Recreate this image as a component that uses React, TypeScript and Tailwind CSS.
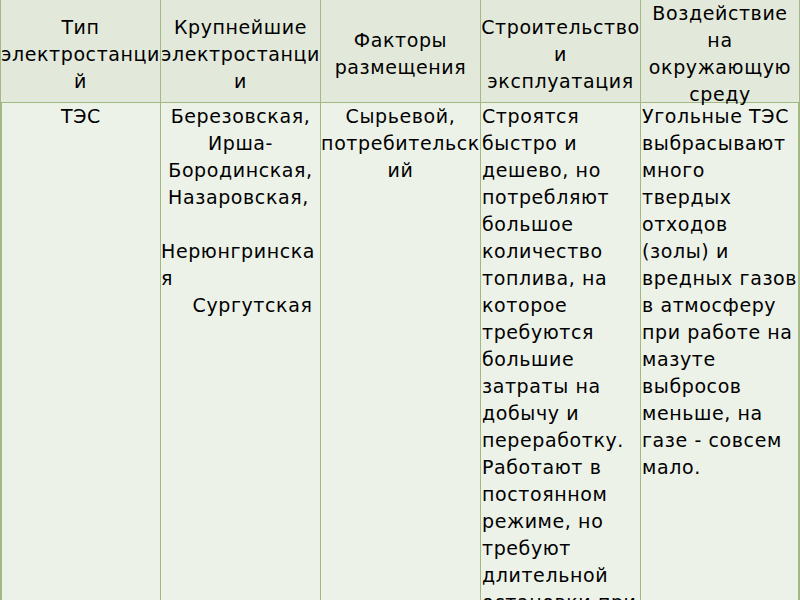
const HEAD: { lines: string[] }[] = [
  { lines: ['Тип', 'электростанци', 'й'] },
  { lines: ['Крупнейшие', 'электростанци', 'и'] },
  { lines: ['Факторы', 'размещения'] },
  { lines: ['Строительство', 'и', 'эксплуатация'] },
  { lines: ['Воздействие', 'на', 'окружающую', 'среду'] },
];

const BUILD = [
  'Строятся',
  'быстро и',
  'дешево, но',
  'потребляют',
  'большое',
  'количество',
  'топлива, на',
  'которое',
  'требуются',
  'большие',
  'затраты на',
  'добычу и',
  'переработку.',
  'Работают в',
  'постоянном',
  'режиме, но',
  'требуют',
  'длительной',
  'остановки при',
];

const IMPACT = [
  'Угольные ТЭС',
  'выбрасывают',
  'много',
  'твердых',
  'отходов',
  '(золы) и',
  'вредных газов',
  'в атмосферу',
  'при работе на',
  'мазуте',
  'выбросов',
  'меньше, на',
  'газе - совсем',
  'мало.',
];

const Line = ({ children, className = '' }: { children: React.ReactNode; className?: string }) => (
  <div className={`whitespace-nowrap h-[27px] ${className}`}>{children}</div>
);

export default function App() {
  return (
    <div
      className="w-[800px] h-[600px] overflow-hidden bg-[#edf2e9] text-black text-[19px] leading-[27px] tracking-[0.6px] flex flex-col"
      style={{ fontFamily: '"DejaVu Sans", Verdana, sans-serif' }}
    >
      {/* header row */}
      <div className="grid grid-cols-5 h-[103px] shrink-0 bg-[#e3e9da] border-b border-[#a3b883]">
        {HEAD.map((h, i) => (
          <div
            key={i}
            className={`border-l border-[#a3b883] flex flex-col items-center justify-center text-center ${i === 4 ? 'border-r' : ''}`}
          >
            {h.lines.map((l, j) => (
              <Line key={j}>{l}</Line>
            ))}
          </div>
        ))}
      </div>

      {/* body row */}
      <div className="grid grid-cols-5 flex-1 min-h-0">
        <div className="border-l-2 border-[#a3b883] text-center">
          <Line>ТЭС</Line>
        </div>
        <div className="border-l border-[#a3b883] text-center">
          <Line>Березовская,</Line>
          <Line>Ирша-</Line>
          <Line>Бородинская,</Line>
          <Line className="pr-1">Назаровская,</Line>
          <Line>{' '}</Line>
          <Line className="text-left">Нерюнгринска</Line>
          <Line className="text-left">я</Line>
          <Line className="pl-6">Сургутская</Line>
        </div>
        <div className="border-l border-[#a3b883] text-center">
          <Line>Сырьевой,</Line>
          <Line>потребительск</Line>
          <Line>ий</Line>
        </div>
        <div className="border-l border-[#a3b883] text-left pl-px">
          {BUILD.map((l, i) => (
            <Line key={i}>{l}</Line>
          ))}
        </div>
        <div className="border-l border-r-2 border-[#a3b883] text-left pl-px">
          {IMPACT.map((l, i) => (
            <Line key={i}>{l}</Line>
          ))}
        </div>
      </div>
    </div>
  );
}
